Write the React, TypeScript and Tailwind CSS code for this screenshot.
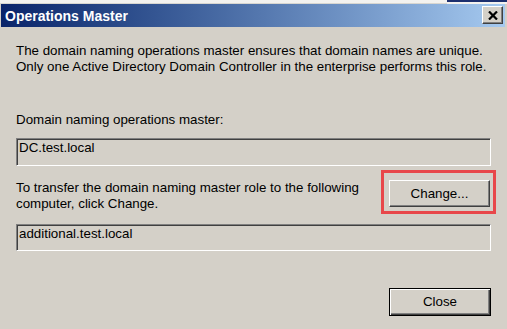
import React from 'react';

const font = { fontFamily: '"Liberation Sans", Arial, sans-serif' };

function Field({ value, height }: { value: string; height: string }) {
  return (
    <div
      className={`${height} w-full border border-t-[#808080] border-l-[#808080] border-r-white border-b-white bg-[#d4d0c8] pl-[2px] pt-[1px] text-[13.33px] leading-[16px] text-black shadow-[inset_1px_1px_0_#404040,inset_-1px_-1px_0_#d4d0c8]`}
    >
      {value}
    </div>
  );
}

export default function App() {
  return (
    <div className="flex h-[329px] w-[507px] flex-col overflow-hidden bg-[#d4d0c8]" style={font}>
      {/* strip of the window behind */}
      <div className="flex h-[4px] shrink-0">
        <div className="flex-1 border-b border-[#d8d6d0] bg-[#f3f2ef]" />
        <div className="w-[60px] bg-[#f3f2ef]">
          <div className="h-[2px] bg-[#1c2f6e]" />
        </div>
      </div>

      {/* title bar */}
      <div className="ml-[1px] mr-[2px] flex h-[23px] shrink-0 items-start justify-between bg-gradient-to-r from-[#0a246a] to-[#a6caf0]">
        <span className="pl-[4px] pt-[4px] text-[14px] font-bold leading-[16px] text-white">Operations Master</span>
        <button className="mr-[2px] mt-[2px] flex h-[18px] w-[21px] items-center justify-center border border-t-white border-l-white border-r-[#404040] border-b-[#404040] bg-[#d4d0c8] shadow-[inset_-1px_-1px_0_#808080]">
          <svg width="10" height="9" viewBox="0 0 10 9">
            <path d="M1 0.5 L9 8.5 M9 0.5 L1 8.5" stroke="#000" strokeWidth="2.2" fill="none" />
          </svg>
        </button>
      </div>

      {/* body */}
      <div className="ml-[16px] mr-[16px] flex flex-col text-[13.33px] leading-[16px] text-black">
        <p className="mt-[16px]">
          The domain naming operations master ensures that domain names are unique.
          <br />
          Only one Active Directory Domain Controller in the enterprise performs this role.
        </p>

        <p className="mt-[37px]">Domain naming operations master:</p>
        <div className="mt-[10px]">
          <Field value="DC.test.local" height="h-[28px]" />
        </div>

        <div className="mt-[14px] flex h-[32px] items-start justify-between">
          <p>
            To transfer the domain naming master role to the following
            <br />
            computer, click Change.
          </p>
          <div className="relative mr-[1px]">
            <button className="h-[27px] w-[101px] border border-t-white border-l-white border-r-[#404040] border-b-[#404040] bg-[#d4d0c8] text-[13.33px] text-black shadow-[inset_-1px_-1px_0_#808080]">
              Change...
            </button>
            <div className="pointer-events-none absolute -bottom-[7px] -left-[8px] -right-[6px] -top-[10px] border-[3px] border-[#e8474a]" />
          </div>
        </div>

        <div className="mt-[12px]">
          <Field value="additional.test.local" height="h-[27px]" />
        </div>

        <div className="mt-[37px] flex justify-end">
          <button className="h-[28px] w-[102px] border border-black bg-[#d4d0c8] text-[13.33px] text-black shadow-[inset_1px_1px_0_#fff,inset_-1px_-1px_0_#404040,inset_-2px_-2px_0_#808080]">
            Close
          </button>
        </div>
      </div>
    </div>
  );
}
